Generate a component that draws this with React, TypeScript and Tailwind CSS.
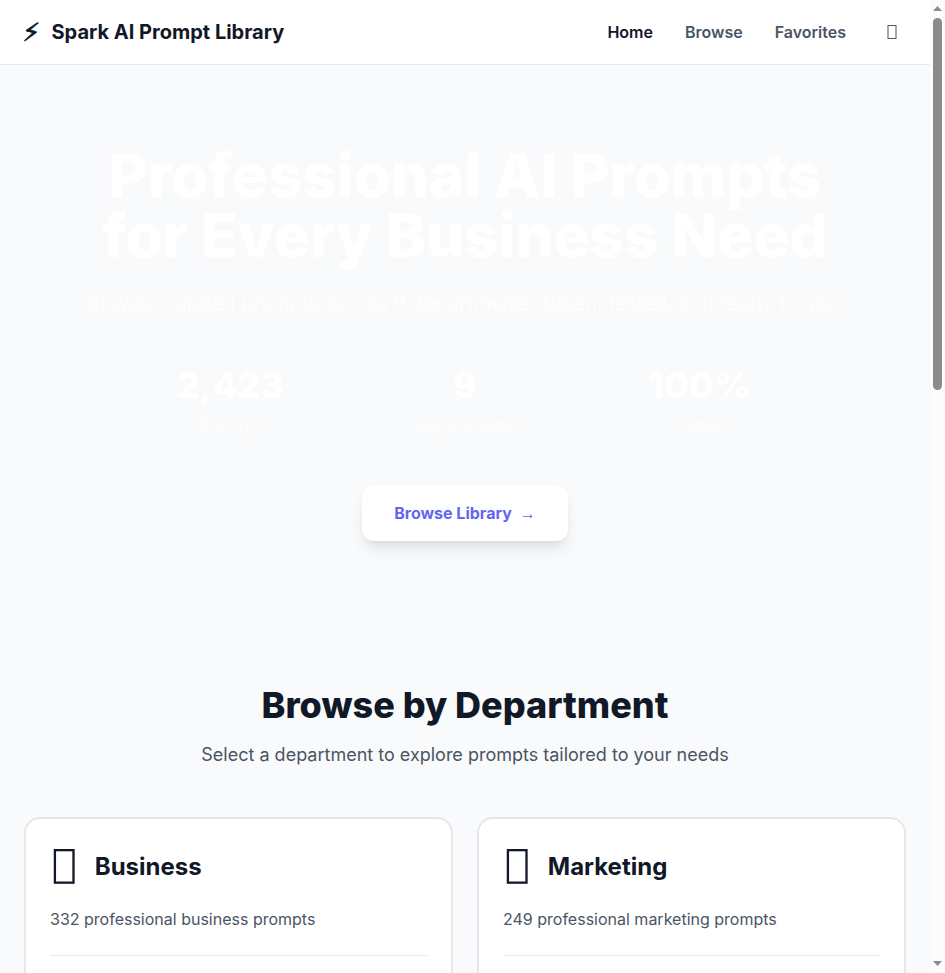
import React from "react";

const stats = [
  ["2,423", "Prompts"],
  ["9", "Departments"],
  ["100%", "Tested"],
];

function Card({ name, text }: { name: string; text: string }) {
  return (
    <div className="h-[240px] rounded-2xl border-2 border-[#e5e7eb] bg-white p-6">
      <div className="mb-4 flex h-12 items-center gap-4">
        <span className="flex w-[28.8px] pb-px pl-[3px]">
          <svg width="22" height="35" viewBox="0 0 22 35" fill="none" stroke="currentColor" strokeWidth="2.3">
            <rect x="1.9" y="1.15" width="18.6" height="32.5" />
          </svg>
        </span>
        <h3 className="text-2xl font-bold">{name}</h3>
      </div>
      <p className="mb-6 text-base leading-6 text-[#4b5563]">{text}</p>
      <div className="border-t border-[#e5e7eb]" />
    </div>
  );
}

export default function App() {
  return (
    <div className="flex h-[973px] w-[945px] overflow-hidden bg-[#f9fafb] font-['Inter','Liberation_Sans',sans-serif] text-[#111827]">
      <div className="h-full w-[930px] overflow-hidden">
        <header className="flex h-[65px] items-center justify-between border-b border-[#e5e7eb] bg-white px-6">
          <div className="flex items-center gap-3 text-xl font-bold">
            <span className="-ml-[1.5px] w-[17px] pt-px font-['DejaVu_Sans'] text-[25px] leading-8 [-webkit-text-stroke:0.8px]">⚡</span>
            <span>Spark AI Prompt Library</span>
          </div>
          <nav className="flex items-center gap-8 text-base font-semibold text-[#4b5563]">
            <span className="text-[#111827]">Home</span>
            <span>Browse</span>
            <span>Favorites</span>
            <span className="flex w-7 pl-[9px]">
              <svg width="10" height="14" viewBox="0 0 10 14" fill="none" stroke="currentColor">
                <rect x="1" y="0.5" width="8" height="13" />
              </svg>
            </span>
          </nav>
        </header>
        <section className="flex h-[556px] flex-col items-center pt-20 text-center text-white">
          <h1 className="text-6xl leading-none font-extrabold">
            Professional AI Prompts<br />for Every Business Need
          </h1>
          <p className="mt-6 text-xl leading-7 text-white opacity-95">
            Browse curated prompts across 9 departments. Clean, tested, and ready to use.
          </p>
          <div className="mt-12 grid w-[704px] grid-cols-3">
            {stats.map(([n, label]) => (
              <div key={label}>
                <div className="text-4xl leading-10 font-extrabold">{n}</div>
                <div className="mt-2 text-base leading-6 text-white opacity-90">{label}</div>
              </div>
            ))}
          </div>
          <button className="mt-12 flex h-14 w-[206px] items-center justify-center gap-2 rounded-xl bg-white font-bold text-[#6366f1] shadow-[0_10px_15px_-3px_rgb(0_0_0/0.1),0_4px_6px_-2px_rgb(0_0_0/0.05)]">
            Browse Library <span className="pt-0.5 font-['Liberation_Sans']">→</span>
          </button>
        </section>
        <section className="px-6 pt-16">
          <h2 className="text-center text-4xl leading-10 font-extrabold">Browse by Department</h2>
          <p className="mt-4 text-center text-lg leading-7 text-[#4b5563]">
            Select a department to explore prompts tailored to your needs
          </p>
          <div className="mt-12 grid grid-cols-2 gap-6">
            <Card name="Business" text="332 professional business prompts" />
            <Card name="Marketing" text="249 professional marketing prompts" />
          </div>
        </section>
      </div>
      <div className="flex w-[15px] flex-col items-center justify-between bg-[#fcfcfc]">
        <div className="flex flex-col items-center">
          <svg width="15" height="18" viewBox="0 0 15 18"><path d="M3 11 7.5 6l4.5 5Z" fill="#8b8b8b" /></svg>
          <div className="h-[372px] w-[9px] rounded-full bg-[#8b8b8b]" />
        </div>
        <svg width="15" height="18" viewBox="0 0 15 18"><path d="M3 6h9l-4.5 5Z" fill="#8b8b8b" /></svg>
      </div>
    </div>
  );
}
